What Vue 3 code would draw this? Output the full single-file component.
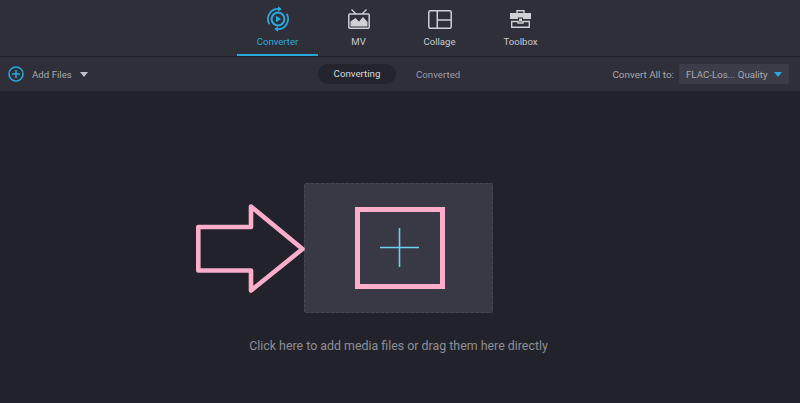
<template>
  <div class="app">
    <header class="topbar">
      <div class="tabs">
        <div v-for="tab in tabs" :key="tab.name" class="tab" :class="{ active: tab.active }">
          <div class="icon-slot">
            <svg v-if="tab.name === 'Converter'" width="26" height="26" viewBox="0 0 26 26" fill="none">
              <path d="M4.4 18.2A10.2 10.2 0 0 1 13.5 2.8" stroke="#2aa8dc" stroke-width="1.7" />
              <path d="M21.6 7.8A10.2 10.2 0 0 1 12.5 23.2" stroke="#2aa8dc" stroke-width="1.7" />
              <path d="M13 0.2 16.8 3 13 5.6Z" fill="#2aa8dc" />
              <path d="M13 20.4 9.2 23 13 25.8Z" fill="#2aa8dc" />
              <circle cx="13" cy="13" r="6.4" stroke="#2aa8dc" stroke-width="2" />
              <path d="M11 9.8 16.2 13 11 16.2Z" fill="#2aa8dc" />
            </svg>
            <svg v-else-if="tab.name === 'MV'" width="22" height="20" viewBox="0 0 22 20" fill="none">
              <path d="M3.5 0.5 8 5M18.5 0.5 14 5" stroke="#d0d0d5" stroke-width="1.3" />
              <rect x="0.8" y="5" width="20.4" height="14.2" rx="1" stroke="#d0d0d5" stroke-width="1.5" />
              <path d="M2.5 17.5V12.5L7.5 9 11 12.5 15 8 19.5 13V17.5Z" fill="#d0d0d5" />
            </svg>
            <svg v-else-if="tab.name === 'Collage'" width="24" height="19" viewBox="0 0 24 19" fill="none">
              <rect x="0.8" y="0.8" width="22.4" height="17.4" rx="1.5" stroke="#d0d0d5" stroke-width="1.5" />
              <path d="M9.3 1V18M9.3 10H23" stroke="#d0d0d5" stroke-width="1.5" />
            </svg>
            <svg v-else width="21" height="18" viewBox="0 0 21 18" fill="none">
              <path d="M7 3.5V0.8H14V3.5" stroke="#d0d0d5" stroke-width="1.4" />
              <path d="M0 3H21V9H13V7.5H8V9H0Z" fill="#d0d0d5" />
              <path d="M1.7 11.5H8V13H13V11.5H19.3V17.2H1.7Z" stroke="#d0d0d5" stroke-width="1.4" />
              <rect x="9" y="8.6" width="3" height="3" fill="#d0d0d5" />
            </svg>
          </div>
          <span class="tab-label">{{ tab.name }}</span>
        </div>
      </div>
    </header>

    <div class="toolbar">
      <div class="add-files">
        <svg width="16" height="16" viewBox="0 0 16 16" fill="none">
          <circle cx="8" cy="8" r="7" stroke="#2aa8dc" stroke-width="1.5" />
          <path d="M8 4V12M4 8H12" stroke="#2aa8dc" stroke-width="1.5" />
        </svg>
        <span class="add-label">Add Files</span>
        <span class="caret"></span>
      </div>
      <div class="switcher">
        <span class="pill">Converting</span>
        <span class="plain">Converted</span>
      </div>
      <div class="convert-all">
        <span>Convert All to:</span>
        <div class="format">
          <span>FLAC-Los... Quality</span>
          <span class="caret blue"></span>
        </div>
      </div>
    </div>

    <main class="stage">
      <div class="drop-row">
        <svg class="arrow" width="112" height="94" viewBox="0 0 112 94" fill="none">
          <path d="M2.3 23H55V2.5L106.5 45 55 86.5V66.5H2.3Z" stroke="#fbadc9" stroke-width="4.6" stroke-linejoin="round" />
        </svg>
        <div class="drop-zone">
          <div class="plus-box">
            <svg width="40" height="40" viewBox="0 0 40 40" fill="none">
              <path d="M19.5 0V39M0 19.5H39" stroke="#6fd0ee" stroke-width="1.6" />
            </svg>
          </div>
        </div>
      </div>
      <p class="hint">Click here to add media files or drag them here directly</p>
    </main>
  </div>
</template>

<script setup>
const tabs = [
  { name: 'Converter', active: true },
  { name: 'MV' },
  { name: 'Collage' },
  { name: 'Toolbox' }
]
</script>

<style>
html,
body {
  margin: 0;
  background: #22232a;
}
</style>

<style scoped>
.app {
  width: 800px;
  height: 403px;
  display: flex;
  flex-direction: column;
  overflow: hidden;
  background: #22232a;
  font-family: Roboto, "Liberation Sans", sans-serif;
  color: #c9c9cf;
}

.topbar {
  height: 56px;
  background: #2e2f39;
  border-bottom: 1px solid #1c1d23;
  display: flex;
  justify-content: center;
}

.tabs {
  display: flex;
  margin-left: -2px;
}

.tab {
  width: 81px;
  height: 56px;
  box-sizing: border-box;
  display: flex;
  flex-direction: column;
  align-items: center;
  padding-top: 6px;
  font-size: 9.6px;
}

.icon-slot {
  height: 26px;
  display: flex;
  align-items: center;
  margin-bottom: 4px;
}

.tab.active {
  color: #2aa8dc;
  border-bottom: 2px solid #2aa8dc;
}

.toolbar {
  height: 34px;
  background: #2e2f39;
  display: flex;
  align-items: center;
  padding: 0 11px 0 8px;
  font-size: 9.7px;
}

.add-files {
  display: flex;
  align-items: center;
  width: 310px;
}

.add-label {
  margin-left: 8px;
  color: #a9a9b0;
}

.caret {
  width: 0;
  height: 0;
  margin-left: 8px;
  border-left: 4px solid transparent;
  border-right: 4px solid transparent;
  border-top: 5px solid #c0c0c6;
}

.caret.blue {
  border-top-color: #2aa8dc;
}

.switcher {
  display: flex;
  align-items: center;
}

.pill {
  width: 78px;
  height: 20px;
  line-height: 20px;
  text-align: center;
  border-radius: 10px;
  background: #23242c;
  color: #d8d8dc;
}

.plain {
  margin-left: 20px;
  color: #9c9ca4;
}

.convert-all {
  margin-left: auto;
  display: flex;
  align-items: center;
  gap: 5px;
  color: #a9a9b0;
  font-size: 9.9px;
}

.format {
  width: 110px;
  height: 20px;
  box-sizing: border-box;
  display: flex;
  align-items: center;
  justify-content: space-between;
  padding: 0 7px;
  background: #3b3c47;
  border-radius: 2px;
  font-size: 9.7px;
}

.format .caret {
  margin-left: 0;
}

.stage {
  flex: 1;
  display: flex;
  flex-direction: column;
  align-items: center;
}

.drop-row {
  position: relative;
  margin-top: 92px;
  margin-left: -3px;
}

.arrow {
  position: absolute;
  left: -108px;
  top: 21px;
  z-index: 1;
}

.drop-zone {
  width: 189px;
  height: 130px;
  box-sizing: border-box;
  padding-left: 3px;
  border: 1px dashed #474853;
  border-radius: 2px;
  background: #383944;
  display: flex;
  align-items: center;
  justify-content: center;
}

.plus-box {
  width: 90px;
  height: 82px;
  box-sizing: border-box;
  border: 5px solid #fbadc9;
  display: flex;
  align-items: center;
  justify-content: center;
}

.hint {
  margin: 25px 3px 0 0;
  font-size: 12.4px;
  color: #8e8e96;
}
</style>
